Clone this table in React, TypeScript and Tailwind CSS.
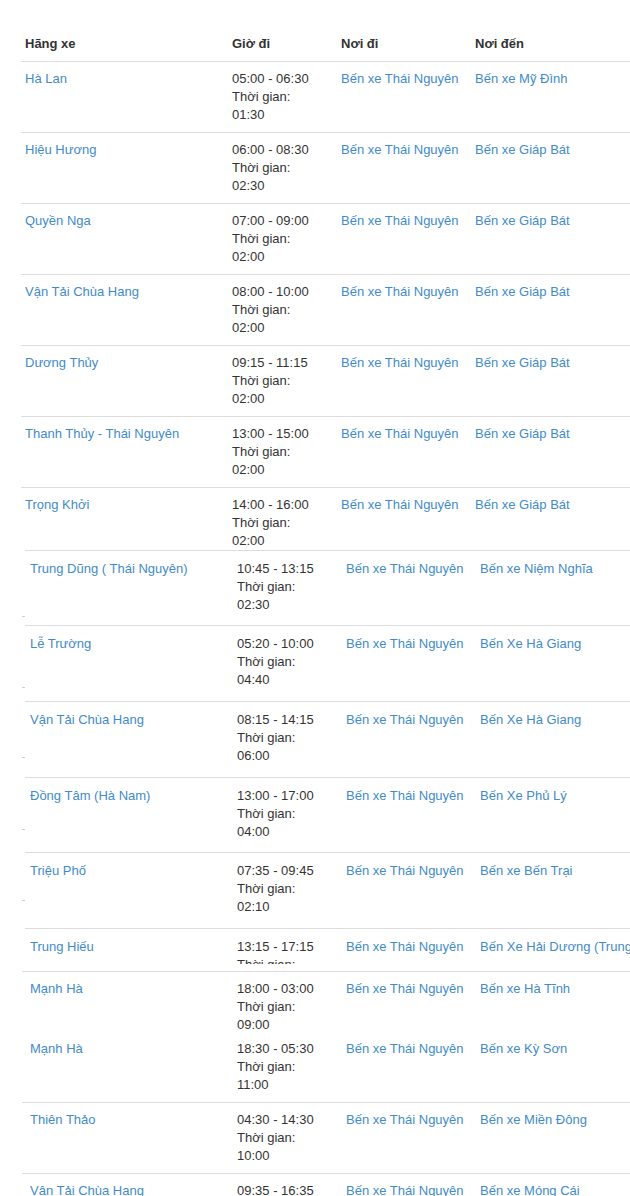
type Trip = { name: string; time: string; dur: string; from: string; to: string };

const first: Trip[] = [
  { name: "Hà Lan", time: "05:00 - 06:30", dur: "01:30", from: "Bến xe Thái Nguyên", to: "Bến xe Mỹ Đình" },
  { name: "Hiệu Hương", time: "06:00 - 08:30", dur: "02:30", from: "Bến xe Thái Nguyên", to: "Bến xe Giáp Bát" },
  { name: "Quyền Nga", time: "07:00 - 09:00", dur: "02:00", from: "Bến xe Thái Nguyên", to: "Bến xe Giáp Bát" },
  { name: "Vận Tải Chùa Hang", time: "08:00 - 10:00", dur: "02:00", from: "Bến xe Thái Nguyên", to: "Bến xe Giáp Bát" },
  { name: "Dương Thủy", time: "09:15 - 11:15", dur: "02:00", from: "Bến xe Thái Nguyên", to: "Bến xe Giáp Bát" },
  { name: "Thanh Thủy - Thái Nguyên", time: "13:00 - 15:00", dur: "02:00", from: "Bến xe Thái Nguyên", to: "Bến xe Giáp Bát" },
  { name: "Trọng Khởi", time: "14:00 - 16:00", dur: "02:00", from: "Bến xe Thái Nguyên", to: "Bến xe Giáp Bát" },
];

const second: (Trip & { row: string; dash: string })[] = [
  { name: "Trung Dũng ( Thái Nguyên)", time: "10:45 - 13:15", dur: "02:30", from: "Bến xe Thái Nguyên", to: "Bến xe Niệm Nghĩa", row: "pb-[11px]", dash: "top-[65px]" },
  { name: "Lễ Trường", time: "05:20 - 10:00", dur: "04:40", from: "Bến xe Thái Nguyên", to: "Bến Xe Hà Giang", row: "pb-[12px]", dash: "top-[61px]" },
  { name: "Vận Tải Chùa Hang", time: "08:15 - 14:15", dur: "06:00", from: "Bến xe Thái Nguyên", to: "Bến Xe Hà Giang", row: "pb-[12px]", dash: "top-[55px]" },
  { name: "Đồng Tâm (Hà Nam)", time: "13:00 - 17:00", dur: "04:00", from: "Bến xe Thái Nguyên", to: "Bến Xe Phủ Lý", row: "pb-[11px]", dash: "top-[51px]" },
  { name: "Triệu Phố", time: "07:35 - 09:45", dur: "02:10", from: "Bến xe Thái Nguyên", to: "Bến xe Bến Trại", row: "pb-[12px]", dash: "top-[47px]" },
];

const cut: Trip = { name: "Trung Hiếu", time: "13:15 - 17:15", dur: "03:00", from: "Bến xe Thái Nguyên", to: "Bến Xe Hải Dương (Trung tâm)" };

const third: (Trip & { row: string })[] = [
  { name: "Mạnh Hà", time: "18:00 - 03:00", dur: "09:00", from: "Bến xe Thái Nguyên", to: "Bến xe Hà Tĩnh", row: "border-t pt-[8px] pb-[6px]" },
  { name: "Mạnh Hà", time: "18:30 - 05:30", dur: "11:00", from: "Bến xe Thái Nguyên", to: "Bến xe Kỳ Sơn", row: "pb-[8px]" },
  { name: "Thiên Thảo", time: "04:30 - 14:30", dur: "10:00", from: "Bến xe Thái Nguyên", to: "Bến xe Miền Đông", row: "border-t pt-[8px] pb-[8px]" },
  { name: "Vận Tải Chùa Hang", time: "09:35 - 16:35", dur: "07:00", from: "Bến xe Thái Nguyên", to: "Bến xe Móng Cái", row: "border-t pt-[8px]" },
];

const link = "whitespace-nowrap text-[#428bca]";

function Cells({ t, pad }: { t: Trip; pad: string }) {
  return (
    <>
      <div className={`${pad} ${link}`}>{t.name}</div>
      <div className={`${pad} whitespace-nowrap text-[#333]`}>
        <div>{t.time}</div>
        <div>Thời gian:</div>
        <div>{t.dur}</div>
      </div>
      <div className={`${pad} ${link}`}>{t.from}</div>
      <div className={`${pad} ${link}`}>{t.to}</div>
    </>
  );
}

export default function App() {
  return (
    <div className="h-[1196px] w-[630px] overflow-hidden bg-white font-['Liberation_Sans',Arial,sans-serif] text-[13px] leading-[18px]">
      <div className="ml-[21px] pt-[27px]">
        <div className="grid grid-cols-[207px_109px_134px_1fr] border-b border-[#ddd] pt-[8px] pb-[8px] font-bold text-[#333]">
          <div className="pl-[4px]">Hãng xe</div>
          <div className="pl-[4px]">Giờ đi</div>
          <div className="pl-[4px]">Nơi đi</div>
          <div className="pl-[4px]">Nơi đến</div>
        </div>
        {first.map((t, i) => (
          <div
            key={i}
            className={`grid grid-cols-[207px_109px_134px_1fr] pt-[8px] ${
              i < first.length - 1 ? "border-b border-[#ddd] pb-[8px]" : ""
            }`}
          >
            <Cells t={t} pad="pl-[4px]" />
          </div>
        ))}
      </div>

      <div className="ml-[25px]">
        {second.map((t, i) => (
          <div
            key={i}
            className={`relative grid grid-cols-[207px_109px_134px_1fr] border-t border-[#ddd] pt-[9px] ${t.row}`}
          >
            <Cells t={t} pad="pl-[5px]" />
            <span className={`absolute left-[-3px] h-px w-[3px] bg-[#ccc] ${t.dash}`} />
          </div>
        ))}
        <div className="border-t border-[#ddd] pt-[9px] pb-[7px]">
          <div className="grid h-[26px] grid-cols-[207px_109px_134px_1fr] overflow-hidden">
            <Cells t={cut} pad="pl-[5px]" />
          </div>
        </div>
      </div>

      <div className="ml-[22px]">
        {third.map((t, i) => (
          <div
            key={i}
            className={`grid grid-cols-[207px_109px_134px_1fr] border-[#ddd] pl-[3px] ${t.row}`}
          >
            <Cells t={t} pad="pl-[5px]" />
          </div>
        ))}
      </div>
    </div>
  );
}
